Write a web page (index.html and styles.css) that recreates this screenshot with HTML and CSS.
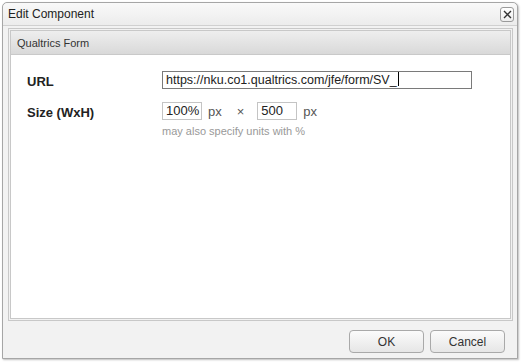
FILE: index.html
```html
<!DOCTYPE html>
<html>
<head>
<meta charset="utf-8">
<link rel="stylesheet" href="styles.css">
</head>
<body>
<div class="window">
  <div class="titlebar">
    <span class="title">Edit Component</span>
    <span class="close">
      <svg width="9" height="9" viewBox="0 0 9 9"><path d="M1 1L8 8M8 1L1 8" stroke="#333" stroke-width="1.4" fill="none"/></svg>
    </span>
  </div>
  <div class="panel">
    <div class="panel-head">Qualtrics Form</div>
    <div class="panel-body">
      <div class="row">
        <label class="label">URL</label>
        <div class="field">
          <div class="input url">https://nku.co1.qualtrics.com/jfe/form/SV_<span class="caret"></span></div>
        </div>
      </div>
      <div class="row">
        <label class="label">Size (WxH)</label>
        <div class="field">
          <div class="size-line">
            <div class="input small">100%</div>
            <span class="unit">px</span>
            <span class="times">×</span>
            <div class="input small">500</div>
            <span class="unit">px</span>
          </div>
          <div class="hint">may also specify units with %</div>
        </div>
      </div>
    </div>
  </div>
  <div class="footer">
    <button class="btn">OK</button>
    <button class="btn">Cancel</button>
  </div>
</div>
</body>
</html>
```
FILE: styles.css
```css
html, body {
  margin: 0;
  padding: 0;
  background: #ffffff;
  font-family: "Liberation Sans", Arial, sans-serif;
}
body {
  width: 522px;
  height: 362px;
  overflow: hidden;
}
.window {
  margin: 2px 0 0 2px;
  width: 514px;
  height: 355px;
  border: 1px solid #a6a6a6;
  border-radius: 5px 5px 0 0;
  background: #f2f2f2;
  display: flex;
  flex-direction: column;
  box-shadow: 1px 1px 2px rgba(0,0,0,0.25);
}
.titlebar {
  height: 22px;
  flex: none;
  border-bottom: 1px solid #d0d0d0;
  background: linear-gradient(#f9f9f9, #ececec);
  border-radius: 5px 5px 0 0;
  display: flex;
  align-items: center;
  justify-content: space-between;
  padding: 0 3px 0 5px;
}
.title {
  font-size: 12px;
  color: #222;
}
.close {
  width: 12px;
  height: 13px;
  border: 1px solid #9a9a9a;
  border-radius: 3px;
  background: linear-gradient(#ffffff, #eeeeee);
  display: flex;
  align-items: center;
  justify-content: center;
}
.panel {
  flex: 1;
  margin: 2px 4px 0 5px;
  border: 3px double #c8c8c8;
  display: flex;
  flex-direction: column;
  min-height: 0;
}
.panel-head {
  height: 23px;
  flex: none;
  border-bottom: 1px solid #c9c9c9;
  background: linear-gradient(#eeeeee, #d9d9d9);
  font-size: 11px;
  color: #333;
  display: flex;
  align-items: center;
  padding-left: 6px;
}
.panel-body {
  flex: 1;
  background: #ffffff;
  padding: 16px 0 0 16px;
  display: flex;
  flex-direction: column;
  gap: 11px;
}
.row {
  display: flex;
  align-items: flex-start;
}
.label {
  width: 135px;
  flex: none;
  font-size: 13px;
  font-weight: bold;
  color: #222;
  line-height: 18px;
  padding-top: 2px;
}
.field {
  display: flex;
  flex-direction: column;
}
.input {
  height: 16px;
  border: 1px solid #c4c4c4;
  font-size: 13px;
  line-height: 16px;
  color: #222;
  padding: 0 3px;
  background: #fff;
  white-space: nowrap;
  box-sizing: content-box;
}
.input.url {
  width: 302px;
  border-color: #7a7a7a;
  font-size: 12.5px;
}
.caret {
  display: inline-block;
  width: 1px;
  height: 14px;
  background: #000;
  vertical-align: -2px;
  margin-left: 1px;
}
.input.small {
  width: 35px;
  padding: 0 0 0 3px;
}
.size-line {
  display: flex;
  align-items: center;
}
.unit {
  font-size: 13px;
  color: #555;
  margin-left: 6px;
}
.times {
  font-size: 13px;
  color: #555;
  margin: 0 13px 0 15px;
}
.hint {
  font-size: 11px;
  color: #999;
  margin-top: 5px;
}
.footer {
  height: 37px;
  flex: none;
  display: flex;
  justify-content: flex-end;
  align-items: flex-start;
  padding: 9px 12px 0 0;
  box-sizing: border-box;
  gap: 6px;
}
.btn {
  width: 75px;
  height: 23px;
  border: 1px solid #a9a9a9;
  border-radius: 4px;
  background: linear-gradient(#fbfbfb, #e6e6e6);
  font-family: "Liberation Sans", Arial, sans-serif;
  font-size: 12px;
  color: #333;
  padding: 0;
}
```
